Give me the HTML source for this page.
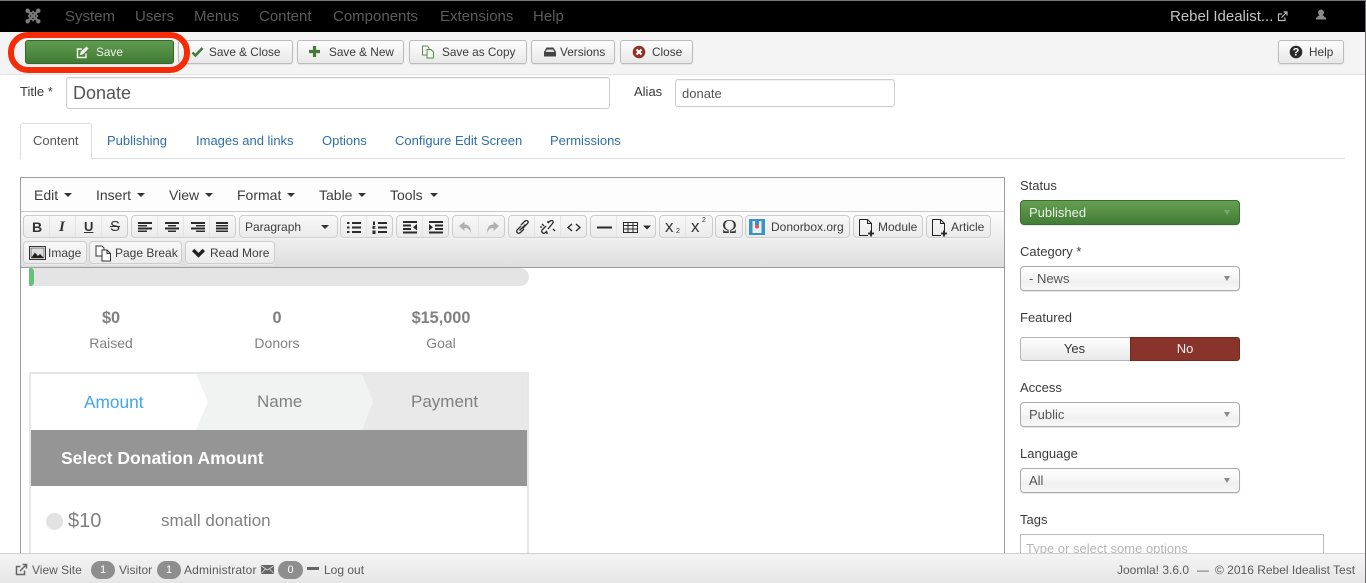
<!DOCTYPE html>
<html lang="en"><head><meta charset="utf-8"><title>Joomla article edit</title>
<style>
*{box-sizing:border-box}
html,body{margin:0;padding:0;width:1366px;height:583px;overflow:hidden;background:#fff}
body{font-family:"Liberation Sans",Arial,sans-serif;color:#333;position:relative}
.a{position:absolute}
.t{position:absolute;white-space:nowrap}
.nav{top:2px;height:31px;line-height:30px;font-size:15px;color:#5c5c5c}
.btn{position:absolute;top:40px;height:24px;border:1px solid #bcbcbc;border-radius:3px;background:linear-gradient(#fdfdfd,#e8e8e8);box-shadow:0 1px 1px rgba(0,0,0,.08);font-size:11.800px;line-height:23px;color:#3a3a3a;white-space:nowrap}
.btn span{position:absolute;top:0}
.btn svg{position:absolute}
.lab{font-size:13px;line-height:16px;color:#3a3a3a}
.in{position:absolute;background:#fff;border:1px solid #ccc;border-radius:3px;box-shadow:inset 0 1px 1px rgba(0,0,0,.06)}
.tab{top:133px;font-size:13px;line-height:16px;color:#2f6ea8}
.mn{top:187px;font-size:14px;line-height:16px;color:#3d3d3d}
.car{position:absolute;width:0;height:0;border-left:4px solid transparent;border-right:4px solid transparent;border-top:4px solid #333}
.g{position:absolute;height:23px;border:1px solid #cdcdcd;border-radius:4px;background:linear-gradient(#f8f8f8,#ebebeb);box-shadow:0 1px 0 rgba(255,255,255,.4)}
.sep{position:absolute;top:216px;width:1px;height:21px;background:#e4e4e4}
.ic{position:absolute}
.tx{font-size:12px;line-height:16px;color:#3d3d3d}
.sel{position:absolute;left:1020px;width:220px;height:25px;border:1px solid #aaa;border-radius:4px;background:linear-gradient(#fff 0,#f5f5f5 50%,#efefef 62%,#f8f8f8 100%);font-size:13px;line-height:23px;padding-left:8px;color:#555;box-shadow:0 1px 1px rgba(0,0,0,.1)}
.sel i{position:absolute;right:9px;top:9px;width:0;height:0;border-left:3.500px solid transparent;border-right:3.500px solid transparent;border-top:5px solid #888}
.d{color:#808080}
.badge{position:absolute;top:561px;height:18px;border-radius:9px;background:#8e8e8e;color:#fff;font-size:11px;line-height:18px;text-align:center}
.f{top:562px;font-size:12px;line-height:16px;color:#5a5a5a}
</style></head><body>

<!-- Top nav -->
<div class="a" style="left:0;top:0;width:1366px;height:1px;background:#777"></div>
<div class="a" style="left:0;top:1px;width:1366px;height:31px;background:#000"></div>
<svg class="a" style="left:25px;top:8px" width="16" height="16" viewBox="0 0 18 18"><g stroke="#7a7a7a" stroke-width="2.600" fill="none" stroke-linecap="round"><path d="M4 4L14 14M14 4L4 14"/><path d="M4 9L9 4L14 9L9 14Z" stroke-width="1.800"/></g><circle cx="3" cy="3" r="2.500" fill="#7a7a7a"/><circle cx="15" cy="3" r="2.500" fill="#7a7a7a"/><circle cx="3" cy="15" r="2.500" fill="#7a7a7a"/><circle cx="15" cy="15" r="2.500" fill="#7a7a7a"/></svg>
<div class="t nav" style="left:65px">System</div>
<div class="t nav" style="left:135px">Users</div>
<div class="t nav" style="left:194px">Menus</div>
<div class="t nav" style="left:259px">Content</div>
<div class="t nav" style="left:333px">Components</div>
<div class="t nav" style="left:440px">Extensions</div>
<div class="t nav" style="left:533px">Help</div>
<div class="t nav" style="left:1170px;color:#c4c4c4;font-size:15px">Rebel Idealist...</div>
<svg class="a" style="left:1277px;top:11px" width="11" height="11" viewBox="0 0 11 11" fill="none" stroke="#bbb" stroke-width="1.200"><path d="M8 6.500V9.500H1.500V3H5"/><path d="M4.500 6.500L9.500 1.500M6.500 1H10V4.500"/></svg>
<svg class="a" style="left:1315px;top:9px" width="12" height="12" viewBox="0 0 12 12" fill="#8a8a8a"><circle cx="6" cy="3.500" r="3"/><path d="M4.500 6L1 9V10.500H11V9L7.500 6Z"/></svg>

<!-- Toolbar -->
<div class="a" style="left:0;top:32px;width:1366px;height:43px;background:#f4f4f4;border-bottom:1px solid #e3e3e3"></div>
<div class="btn" style="left:178px;width:115px"><svg style="left:12px;top:5px" width="13" height="12" viewBox="0 0 13 12"><path d="M1.500 6.500L4.500 9.500L11.500 2" fill="none" stroke="#46793a" stroke-width="2.600"/></svg><span style="left:30px">Save &amp; Close</span></div>
<div class="btn" style="left:297px;width:107px"><svg style="left:10px;top:4px" width="13" height="13" viewBox="0 0 13 13"><path d="M6.500 1V12M1 6.500H12" stroke="#46793a" stroke-width="3.200"/></svg><span style="left:31px">Save &amp; New</span></div>
<div class="btn" style="left:409px;width:118px"><svg style="left:11px;top:4px" width="14" height="14" viewBox="0 0 14 14" fill="#f4f8f2" stroke="#5b8a4c"><path d="M1.500 1H6.500L8 3V10H1.500Z"/><path d="M6 4.500H10L12.500 7V13H6Z"/></svg><span style="left:32px">Save as Copy</span></div>
<div class="btn" style="left:531px;width:84px"><svg style="left:11px;top:6px" width="14" height="10" viewBox="0 0 14 10"><path d="M3.500 0.500H10.500L13 5V9.500H1V5Z" fill="#444"/><path d="M4 2.500H10L11.500 5H2.500Z" fill="#ddd"/></svg><span style="left:28px">Versions</span></div>
<div class="btn" style="left:620px;width:73px"><svg style="left:11px;top:4px" width="14" height="14" viewBox="0 0 14 14"><circle cx="7" cy="7" r="6.300" fill="#8f3428"/><path d="M4.500 4.500L9.500 9.500M9.500 4.500L4.500 9.500" stroke="#fff" stroke-width="2"/></svg><span style="left:31px">Close</span></div>
<div class="btn" style="left:1278px;width:66px"><svg style="left:10px;top:4px" width="14" height="14" viewBox="0 0 14 14"><circle cx="7" cy="7" r="6.300" fill="#2b2b2b"/><text x="7" y="10.700" text-anchor="middle" font-family="Liberation Sans" font-weight="700" font-size="11" fill="#fff">?</text></svg><span style="left:30px">Help</span></div>

<div class="btn" style="left:25px;width:149px;background:linear-gradient(#5f9c4f,#417a35);border-color:#35652b;color:#eef4ec"><svg style="left:50px;top:5px" width="13" height="13" viewBox="0 0 13 13" fill="none" stroke="#f2f2f2" stroke-width="1.500"><path d="M10 7.500V11.500H1.500V3H6"/><path d="M4.500 8.500L5 6L10.500 1L12 2.500L6.800 8Z" fill="#f2f2f2" stroke-width="0.800"/></svg><span style="left:70px">Save</span></div>
<div class="a" style="left:8px;top:32px;width:182px;height:41px;border:6px solid #f52c06;border-radius:20px"></div>

<!-- Title row -->
<div class="t lab" style="left:20px;top:84px">Title *</div>
<div class="in" style="left:66px;top:77px;width:544px;height:32px;font-size:18px;line-height:30px;padding-left:6px;color:#555">Donate</div>
<div class="t lab" style="left:634px;top:84px">Alias</div>
<div class="in" style="left:675px;top:79px;width:220px;height:28px;font-size:13px;line-height:27px;padding-left:6px;color:#555">donate</div>

<!-- Tabs -->
<div class="a" style="left:20px;top:158px;width:1325px;height:1px;background:#ddd"></div>
<div class="a" style="left:20px;top:123px;width:72px;height:36px;background:#fff;border:1px solid #ddd;border-bottom:0;border-radius:3px 3px 0 0"></div>
<div class="t tab" style="left:33px;color:#555">Content</div>
<div class="t tab" style="left:107px">Publishing</div>
<div class="t tab" style="left:196px">Images and links</div>
<div class="t tab" style="left:322px">Options</div>
<div class="t tab" style="left:395px">Configure Edit Screen</div>
<div class="t tab" style="left:550px">Permissions</div>

<!-- Editor -->
<div class="a" style="left:20px;top:177px;width:985px;height:400px;border:1px solid #9e9e9e;background:#fff"></div>
<div class="a" style="left:21px;top:178px;width:983px;height:34px;background:#fdfdfd;border-bottom:1px solid #c8c8c8"></div>
<div class="a" style="left:21px;top:212px;width:983px;height:55px;background:linear-gradient(#fdfdfd,#dedede)"></div>
<div class="a" style="left:21px;top:267px;width:983px;height:1px;background:#9e9e9e"></div>

<div class="t mn" style="left:34px">Edit</div><div class="car" style="left:64px;top:193px"></div>
<div class="t mn" style="left:96px">Insert</div><div class="car" style="left:137px;top:193px"></div>
<div class="t mn" style="left:169px">View</div><div class="car" style="left:205px;top:193px"></div>
<div class="t mn" style="left:237px">Format</div><div class="car" style="left:287px;top:193px"></div>
<div class="t mn" style="left:319px">Table</div><div class="car" style="left:358px;top:193px"></div>
<div class="t mn" style="left:390px">Tools</div><div class="car" style="left:430px;top:193px"></div>

<!-- Row 1 groups -->
<div class="g" style="left:23px;top:215px;width:105px"></div>
<div class="g" style="left:131px;top:215px;width:105px"></div>
<div class="g" style="left:239px;top:215px;width:99px"></div>
<div class="g" style="left:340px;top:215px;width:53px"></div>
<div class="g" style="left:396px;top:215px;width:53px"></div>
<div class="g" style="left:452px;top:215px;width:53px"></div>
<div class="g" style="left:508px;top:215px;width:79px"></div>
<div class="g" style="left:590px;top:215px;width:66px"></div>
<div class="g" style="left:659px;top:215px;width:54px"></div>
<div class="g" style="left:715px;top:215px;width:28px"></div>
<div class="g" style="left:745px;top:215px;width:105px"></div>
<div class="g" style="left:853px;top:215px;width:70px"></div>
<div class="g" style="left:926px;top:215px;width:65px"></div>
<div class="g" style="left:23px;top:241px;width:64px"></div>
<div class="g" style="left:89px;top:241px;width:93px"></div>
<div class="g" style="left:185px;top:241px;width:90px"></div>
<div class="sep" style="left:49px"></div><div class="sep" style="left:75px"></div><div class="sep" style="left:101px"></div>
<div class="sep" style="left:157px"></div><div class="sep" style="left:183px"></div><div class="sep" style="left:209px"></div>
<div class="sep" style="left:366px"></div><div class="sep" style="left:422px"></div><div class="sep" style="left:478px"></div>
<div class="sep" style="left:534px"></div><div class="sep" style="left:560px"></div><div class="sep" style="left:616px"></div><div class="sep" style="left:685px"></div>

<div class="t" style="left:32px;top:219px;font-size:14px;line-height:16px;font-weight:700;color:#333">B</div>
<div class="t" style="left:59px;top:219px;font-size:15px;line-height:16px;font-style:italic;color:#333;font-family:'Liberation Serif',serif;font-weight:700">I</div>
<div class="t" style="left:84px;top:219px;font-size:13px;line-height:15px;font-weight:700;color:#333;text-decoration:underline">U</div>
<div class="t" style="left:110px;top:219px;font-size:15px;line-height:16px;color:#333;text-decoration:line-through">S</div>

<svg class="ic" style="left:138px;top:221px" width="90" height="12" viewBox="0 0 90 12" fill="#2b2b2b"><path d="M0 1h14v2H0zM0 4h9v1.500H0zM0 6.500h14v2H0zM0 9.500h9v1.500H0z"/><path d="M27 1h14v2H27zM30 4h8v1.500h-8zM27 6.500h14v2H27zM30 9.500h8v1.500h-8z"/><path d="M53 1h14v2H53zM58 4h9v1.500h-9zM53 6.500h14v2H53zM58 9.500h9v1.500h-9z"/><path d="M78 1h14v2H78zM78 4h14v1.500H78zM78 6.500h14v2H78zM78 9.500h14v1.500H78z"/></svg>

<div class="t tx" style="left:245px;top:219px">Paragraph</div>
<div class="car" style="left:321px;top:225px"></div>

<svg class="ic" style="left:347px;top:221px" width="46" height="13" viewBox="0 0 46 13" fill="#2b2b2b"><path d="M0 1h2.500v2H0zM5 1h9v2H5zM0 5.500h2.500v2H0zM5 5.500h9v2H5zM0 10h2.500v2H0zM5 10h9v2H5z"/><path d="M31 1h9v2h-9zM31 5.500h9v2h-9zM31 10h9v2h-9zM26 .500h2v3.500h-2zM25.500 5h3v1l-2 1.200h2v.8h-3zM25.500 9.500h3v3.500h-3z"/></svg>
<svg class="ic" style="left:403px;top:221px" width="40" height="13" viewBox="0 0 40 13" fill="#2b2b2b"><path d="M0 0h14v2H0zM0 3.500h8v2H0zM0 7h8v2H0zM0 10.500h14v2H0zM14 3v6.500L10 6.300z"/><path d="M26 0h14v2H26zM32 3.500h8v2h-8zM32 7h8v2h-8zM26 10.500h14v2H26zM26 3v6.500L30 6.300z"/></svg>
<svg class="ic" style="left:459px;top:221px" width="40" height="13" viewBox="0 0 40 13" fill="#b0b0b0"><path d="M0 5L5.500 .500V3.500C10 3.500 12 6.500 12 12C10.500 8.500 9 7 5.500 7V10Z"/><path d="M40 5L34.500 .500V3.500C30 3.500 28 6.500 28 12C29.500 8.500 31 7 34.500 7V10Z"/></svg>
<svg class="ic" style="left:515px;top:220px" width="66" height="15" viewBox="0 0 66 15" fill="none" stroke="#2b2b2b" stroke-width="1.300"><path d="M6 6L2.500 9.500C.5 12 3 14.500 5.500 12.500L9 9M7.500 8.500L12.500 3.500C14.500 1 11.500-.5 9.500 1.500L6 5M4.500 10.500L10.500 4.500"/><path d="M31 6L27.500 9.500C25.500 12 28 14.500 30.500 12.500L32 11M33 9L37.500 3.500C39.500 1 36.500-.5 34.500 1.500L33 3M27 4L29 6M38 9L40 11M25 7H27M33 1V3M32 12V14"/><path d="M57 4L53 7.500L57 11M61 4L65 7.500L61 11" stroke-width="1.400"/></svg>
<svg class="ic" style="left:597px;top:221px" width="56" height="13" viewBox="0 0 56 13"><path d="M0 5.500H15V7.500H0z" fill="#2b2b2b"/><path d="M26.500 1.500H40.500V11.500H26.500ZM26.500 4.500H40.500M26.500 8H40.500M31 1.500V11.500M36 1.500V11.500" fill="none" stroke="#2b2b2b"/><path d="M46 4.500H54L50 8.500Z" fill="#2b2b2b"/></svg>
<div class="t" style="left:665px;top:218px;font-size:17px;line-height:18px;color:#333">x</div>
<div class="t" style="left:676px;top:228px;font-size:7px;line-height:8px;color:#333">2</div>
<div class="t" style="left:691px;top:218px;font-size:17px;line-height:18px;color:#333">x</div>
<div class="t" style="left:702px;top:217px;font-size:7px;line-height:8px;color:#333">2</div>
<div class="t" style="left:722px;top:216px;font-size:20px;line-height:22px;font-family:'Liberation Serif',serif;color:#333">Ω</div>
<svg class="ic" style="left:749px;top:219px" width="16" height="16" viewBox="0 0 16 16"><rect width="16" height="16" fill="#3b92c4"/><rect x="3.500" y="2" width="9" height="12" fill="#e6eef2"/><path d="M6 2h4v4H6z" fill="#3b92c4"/><circle cx="8" cy="7.500" r="2" fill="#d9534f"/></svg>
<div class="t tx" style="left:771px;top:219px">Donorbox.org</div>
<svg class="ic" style="left:858px;top:219px" width="18" height="18" viewBox="0 0 18 18" fill="none" stroke="#222"><path d="M1.500 .5H9.500L13.500 4.500V13M10 16.500H1.500V.5"/><path d="M9.500 .5V4.500H13.500"/><path d="M13 11.500V17.500M10 14.500H16" stroke-width="1.800"/></svg>
<div class="t tx" style="left:878px;top:219px">Module</div>
<svg class="ic" style="left:931px;top:219px" width="18" height="18" viewBox="0 0 18 18" fill="none" stroke="#222"><path d="M1.500 .5H9.500L13.500 4.500V13M10 16.500H1.500V.5"/><path d="M9.500 .5V4.500H13.500"/><path d="M13 11.500V17.500M10 14.500H16" stroke-width="1.800"/></svg>
<div class="t tx" style="left:951px;top:219px">Article</div>
<svg class="ic" style="left:29px;top:246px" width="17" height="14" viewBox="0 0 17 14"><rect x=".5" y=".5" width="16" height="13" fill="#fff" stroke="#333"/><rect x="2" y="2" width="13" height="10" fill="#ddd" stroke="#333" stroke-width=".6"/><path d="M2 12L6 6.500L9 10L11 8L15 12Z" fill="#222"/></svg>
<div class="t tx" style="left:48px;top:245px">Image</div>
<svg class="ic" style="left:95px;top:245px" width="17" height="17" viewBox="0 0 17 17" fill="#fff" stroke="#333"><path d="M1 1H7L9 3V11H1Z"/><path d="M7 5H12L15.500 8.500V16H7Z"/><path d="M12 5V8.500H15.500" fill="none"/></svg>
<div class="t tx" style="left:115px;top:245px">Page Break</div>
<svg class="ic" style="left:191px;top:247px" width="15" height="12" viewBox="0 0 15 12"><path d="M2.200 3L7.500 8.300L12.800 3" fill="none" stroke="#222" stroke-width="3.400"/></svg>
<div class="t tx" style="left:210px;top:245px">Read More</div>

<!-- Donation widget -->
<div class="a" style="left:29px;top:268px;width:500px;height:18px;background:#e4e4e4;border-radius:0 9px 9px 0"></div>
<div class="a" style="left:29px;top:268px;width:5px;height:18px;background:#62c27a;border-radius:2px 4px 4px 2px"></div>

<div class="t d" style="left:31px;width:160px;text-align:center;top:309px;font-size:16.300px;line-height:18px;font-weight:700">$0</div>
<div class="t d" style="left:197px;width:160px;text-align:center;top:309px;font-size:16.300px;line-height:18px;font-weight:700">0</div>
<div class="t d" style="left:361px;width:160px;text-align:center;top:309px;font-size:16.300px;line-height:18px;font-weight:700">$15,000</div>
<div class="t d" style="left:31px;width:160px;text-align:center;top:335px;font-size:14px;line-height:16px">Raised</div>
<div class="t d" style="left:197px;width:160px;text-align:center;top:335px;font-size:14px;line-height:16px">Donors</div>
<div class="t d" style="left:361px;width:160px;text-align:center;top:335px;font-size:14px;line-height:16px">Goal</div>

<div class="a" style="left:29px;top:372px;width:500px;height:200px;border:2px solid #e6e6e6;background:#fff"></div>
<svg class="a" style="left:31px;top:374px" width="496" height="56" viewBox="0 0 496 56"><rect width="496" height="56" fill="#e9e9e9"/><path d="M165 0H331L342 28L331 56H165L177 28Z" fill="#f1f2f2"/><path d="M0 0H165L177 28L165 56H0Z" fill="#fff"/></svg>
<div class="t" style="left:84px;top:393px;font-size:17.300px;line-height:18px;color:#42a5ec">Amount</div>
<div class="t d" style="left:257px;top:393px;font-size:17px;line-height:18px">Name</div>
<div class="t d" style="left:411px;top:393px;font-size:17px;line-height:18px">Payment</div>
<div class="a" style="left:31px;top:430px;width:496px;height:56px;background:#959595"></div>
<div class="t" style="left:61px;top:448px;font-size:17.500px;line-height:20px;font-weight:700;color:#fff">Select Donation Amount</div>
<div class="a" style="left:46px;top:513px;width:17px;height:17px;border-radius:50%;background:#e2e2e2"></div>
<div class="t d" style="left:68px;top:510px;font-size:20px;line-height:22px">$10</div>
<div class="t d" style="left:161px;top:512px;font-size:17px;line-height:18px">small donation</div>

<!-- Sidebar -->
<div class="t lab" style="left:1020px;top:178px">Status</div>
<div class="sel" style="top:200px;background:linear-gradient(#64a052,#437c36);border-color:#3a6d2f;color:#eaf2e7"><span>Published</span><i style="border-top-color:#7da874"></i></div>
<div class="t lab" style="left:1020px;top:244px">Category *</div>
<div class="sel" style="top:266px">- News<i></i></div>
<div class="t lab" style="left:1020px;top:310px">Featured</div>
<div class="a" style="left:1020px;top:337px;width:110px;height:24px;border:1px solid #b5b5b5;border-right:0;border-radius:3px 0 0 3px;background:linear-gradient(#fff,#e9e9e9);font-size:13px;line-height:22px;text-align:center;color:#333;padding-right:2px">Yes</div>
<div class="a" style="left:1130px;top:337px;width:110px;height:24px;border:1px solid #74281e;border-radius:0 3px 3px 0;background:#89342b;font-size:13px;line-height:22px;text-align:center;color:#eee">No</div>
<div class="t lab" style="left:1020px;top:380px">Access</div>
<div class="sel" style="top:402px">Public<i></i></div>
<div class="t lab" style="left:1020px;top:446px">Language</div>
<div class="sel" style="top:468px">All<i></i></div>
<div class="t lab" style="left:1020px;top:512px">Tags</div>
<div class="a" style="left:1020px;top:534px;width:304px;height:40px;border:1px solid #bbb;background:#fff"></div>
<div class="t" style="left:1026px;top:541px;font-size:13px;line-height:16px;color:#b5b5b5">Type or select some options</div>

<!-- Footer -->
<div class="a" style="left:0;top:553px;width:1366px;height:30px;background:linear-gradient(#f4f4f4,#e6e6e6);border-top:1px solid #d0d0d0"></div>
<svg class="a" style="left:15px;top:563px" width="13" height="13" viewBox="0 0 13 13" fill="none" stroke="#666" stroke-width="1.500"><path d="M9.500 7.500V11.500H1.500V3.500H5.500"/><path d="M5 8L11 2M7.500 1.500H11.500V5.500"/></svg>
<div class="t f" style="left:32px">View Site</div>
<div class="badge" style="left:91px;width:24px">1</div>
<div class="t f" style="left:119px">Visitor</div>
<div class="badge" style="left:157px;width:24px">1</div>
<div class="t f" style="left:184px;letter-spacing:.15px">Administrator</div>
<svg class="a" style="left:261px;top:565px" width="13" height="9" viewBox="0 0 13 9"><rect width="13" height="9" rx="1" fill="#666"/><path d="M.5 1L6.500 5L12.500 1M.5 8L4.500 4M12.500 8L8.500 4" stroke="#ddd" stroke-width=".8" fill="none"/></svg>
<div class="badge" style="left:278px;width:25px">0</div>
<div class="a" style="left:307px;top:567px;width:12px;height:3px;background:#666"></div>
<div class="t f" style="left:324px">Log out</div>
<div class="t f" style="left:1117px">Joomla! 3.6.0</div>
<div class="t f" style="left:1197px">—</div>
<div class="t f" style="left:1215px">© 2016 Rebel Idealist Test</div>

<div class="a" style="left:1365px;top:0;width:1px;height:583px;background:#7a6a58"></div>
</body></html>
